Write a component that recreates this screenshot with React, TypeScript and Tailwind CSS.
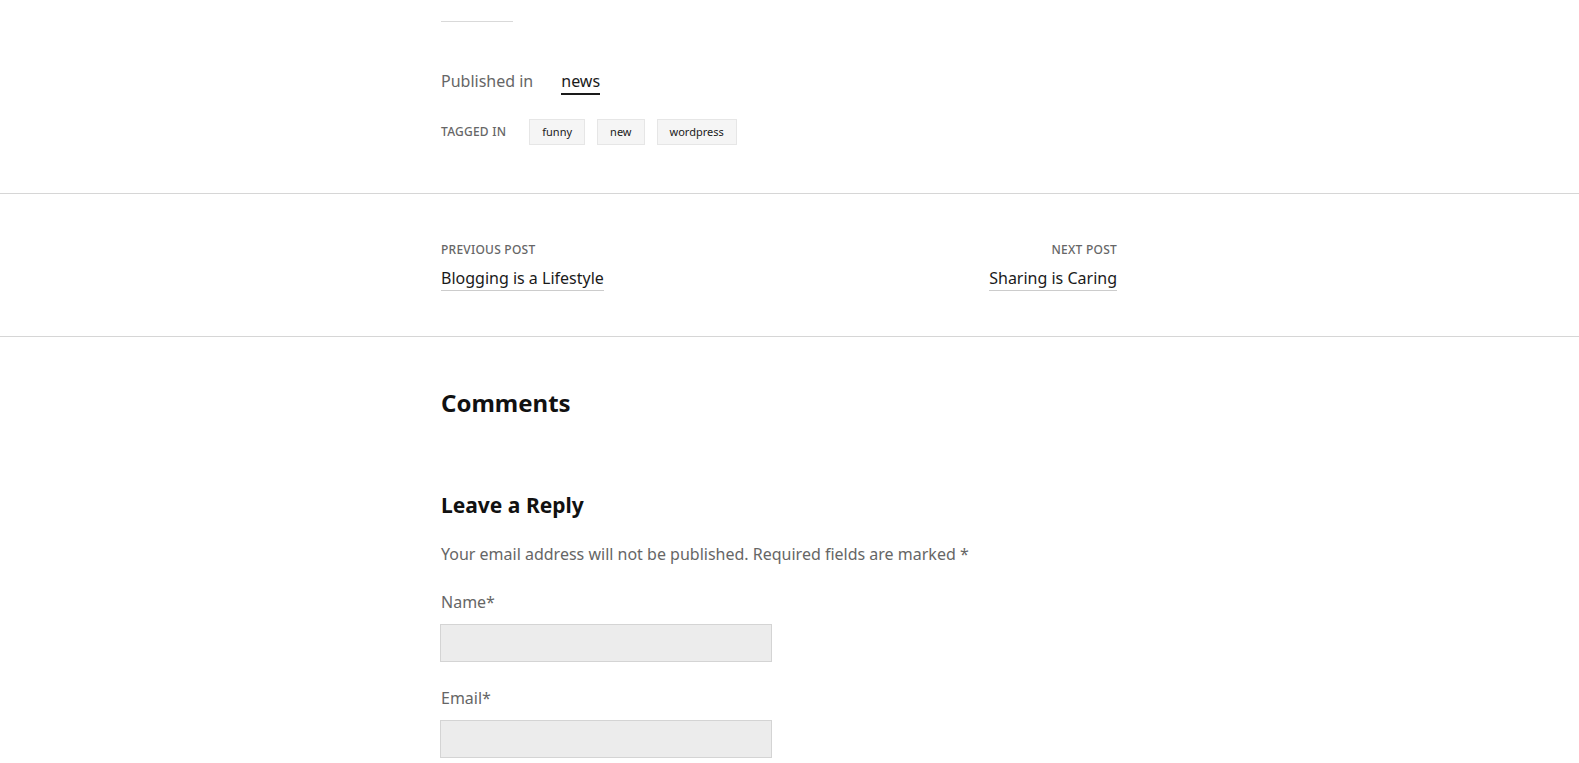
import React from "react";

export default function App() {
  const tags = ["funny", "new", "wordpress"];

  return (
    <main className="min-h-screen bg-white font-['Noto_Sans',sans-serif] text-[#1a1a1a]">
      {/* Post footer meta */}
      <section className="ml-[441px] w-[676px] pt-[21px] pb-[48px]">
        <div className="h-px w-[72px] bg-[#d9d9d9]"></div>

        <div className="mt-[47px] flex items-start gap-[28px] text-[16px] leading-6">
          <span className="text-[#666]">Published in</span>
          <a className="inline-block border-b-2 border-[#1a1a1a] leading-6 text-[#1a1a1a]">news</a>
        </div>

        <div className="mt-[24px] flex items-center">
          <span className="mr-[23px] text-[12px] leading-4 font-medium uppercase tracking-[0.02em] text-[#666]">
            Tagged in
          </span>
          <div className="flex gap-3">
            {tags.map((t) => (
              <span
                key={t}
                className="border border-[#e6e6e6] bg-[#f5f5f5] px-3 py-1 text-[11px] leading-4 text-[#1a1a1a]"
              >
                {t}
              </span>
            ))}
          </div>
        </div>
      </section>

      {/* Post navigation */}
      <nav className="border-y border-[#d6d6d6]">
        <div className="ml-[441px] flex w-[676px] justify-between pt-[48px] pb-[45px]">
          <div className="flex flex-col items-start">
            <span className="text-[12px] leading-4 font-medium uppercase tracking-[0.02em] text-[#666]">Previous Post</span>
            <a className="mt-[9px] inline-block border-b border-[#ccc] text-[16px] leading-[23px] text-[#1a1a1a]">
              Blogging is a Lifestyle
            </a>
          </div>
          <div className="flex flex-col items-end">
            <span className="text-[12px] leading-4 font-medium uppercase tracking-[0.02em] text-[#666]">Next Post</span>
            <a className="mt-[9px] inline-block border-b border-[#ccc] text-[16px] leading-[23px] text-[#1a1a1a]">
              Sharing is Caring
            </a>
          </div>
        </div>
      </nav>

      {/* Comments */}
      <section className="ml-[441px] w-[676px] pt-[50px]">
        <h2 className="text-[24px] leading-8 font-bold text-[#111]">Comments</h2>

        <h3 className="mt-[72px] text-[21px] leading-7 font-bold text-[#111]">Leave a Reply</h3>

        <p className="mt-[23px] text-[16px] leading-6 text-[#666]">
          Your email address will not be published. Required fields are marked *
        </p>

        <form className="mt-[24px]">
          <label className="block text-[16px] leading-6 text-[#666]">Name*</label>
          <input
            type="text"
            className="-ml-px mt-[10px] block h-[38px] w-[332px] border border-[#d4d4d4] bg-[#ececec] outline-none"
          />
          <label className="mt-[24px] block text-[16px] leading-6 text-[#666]">Email*</label>
          <input
            type="email"
            className="-ml-px mt-[10px] block h-[38px] w-[332px] border border-[#d4d4d4] bg-[#ececec] outline-none"
          />
        </form>
      </section>
    </main>
  );
}
